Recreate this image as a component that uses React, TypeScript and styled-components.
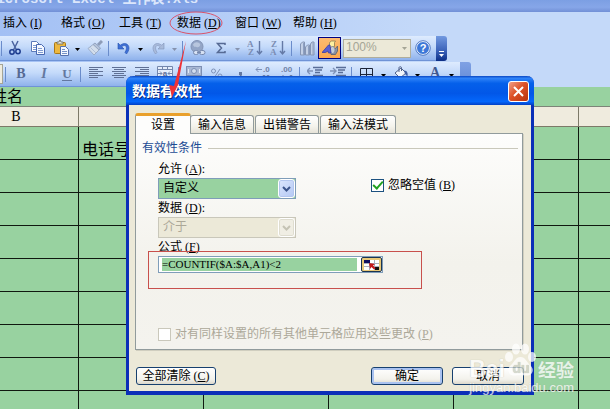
import React from "react";
import styled, { createGlobalStyle, css } from "styled-components";

const sans = `"Liberation Sans", "Noto Sans CJK SC", sans-serif`;
const serif = `"Liberation Serif", "Noto Sans CJK SC", serif`;
const green = "#98d2a0";

const GlobalStyle = createGlobalStyle`
  * { box-sizing: border-box; }
  body { margin: 0; font: 12px/14px ${serif}; color: #000; }
  button, input, select { font: inherit; color: inherit; margin: 0; }
`;

const Screen = styled.div`
  position: relative;
  height: 100vh;
  overflow: hidden;
  background: ${green};
`;

/* ---------- Application window ---------- */

const TitleBar = styled.header`
  height: 12px;
  display: flex;
  align-items: flex-end;
  overflow: hidden;
  background: linear-gradient(#7c9fe3, #86a6e8 60%, #7290d6);
  color: #dbe6fb;
  font: bold 14px/20px "Liberation Mono", "Noto Sans CJK SC", monospace;
  white-space: pre;
`;

const TitleText = styled.span`
  margin: 0 0 3px -12px;
`;

const Dock = styled.div`
  background: linear-gradient(90deg, #a3c0f4, #c4d9f9 70%);
`;

const MenuBar = styled.nav`
  display: flex;
  height: 24px;
  padding-left: 3px;
`;

const MenuItem = styled.button`
  flex: none;
  width: 58px;
  padding: 0 0 2px;
  border: 0;
  background: none;
  text-align: left;
  white-space: nowrap;
`;

const Key = styled.span`
  padding-left: 3px;
`;

const Toolbar = styled.div`
  display: flex;
  align-items: stretch;
  width: max-content;
  height: 25px;
  & + & { margin-top: 1px; }
`;

const Tools = styled.div<{ $end?: number }>`
  display: flex;
  align-items: center;
  padding-right: ${(p) => p.$end ?? 0}px;
  border-bottom: 1px solid #6f93d6;
  background: linear-gradient(#deebfe, #c4dafa 45%, #8fb2ec);
`;

const ToolButton = styled.button<{ $active?: boolean }>`
  display: grid;
  place-items: center;
  width: 23px;
  height: 22px;
  padding: 0;
  border: 1px solid transparent;
  background: none;
  ${(p) =>
    p.$active &&
    css`
      border-color: #000080;
      background: linear-gradient(#fdbb70, #fda850);
    `}
`;

const MoreButton = styled.button`
  display: grid;
  place-items: center;
  width: 11px;
  height: 22px;
  padding: 2px 0 0;
  border: 0;
  background: none;
`;

const Divider = styled.span`
  width: 1px;
  height: 15px;
  margin: 0 3px 0 2px;
  background: #6a8ccb;
`;

const FirstDivider = styled(Divider)`
  margin: 0 1px;
`;

const SizeBoxEdge = styled.span`
  width: 3px;
  height: 20px;
  border: 1px solid #a5a596;
  border-left: 0;
  background: #efebde;
`;

const ZoomSelect = styled.span`
  position: relative;
  width: 68px;
  height: 19px;
  margin-left: 2px;
  color: #a5a596;
  select {
    appearance: none;
    display: block;
    width: 100%;
    height: 100%;
    padding: 0 0 2px 2px;
    border: 1px solid #b0ae9c;
    border-radius: 0;
    background: #ece9d8;
    opacity: 1;
    font: 12px/14px ${sans};
  }
  svg {
    position: absolute;
    right: 4px;
    top: 8px;
  }
`;

const EndCap = styled.button<{ $strong?: boolean }>`
  display: flex;
  align-items: flex-end;
  justify-content: center;
  width: 11px;
  padding: 0 0 3px;
  border: 0;
  border-radius: 0 3px 3px 0;
  background: ${(p) =>
    p.$strong ? "linear-gradient(#7299e0, #3a61b8 60%, #0c2e86)" : "linear-gradient(#7fa1e4, #5f87d4)"};
`;

/* ---------- Sheet ---------- */

const FormulaBar = styled.div`
  height: 20px;
  border-bottom: 1px solid #7d8478;
  background: ${green};
  font: 16px/19px ${serif};
`;

const FormulaText = styled.span`
  display: block;
  margin-left: -9px;
`;

const Sheet = styled.table`
  table-layout: fixed;
  width: max(100%, 750px);
  margin-left: -46px;
  border-spacing: 0;
  col { width: 125px; }
  th {
    height: 20px;
    padding: 1px 0 0;
    border-right: 1px solid #7d7968;
    border-bottom: 1px solid #7d7968;
    background: #efebde;
    font: 14px/18px ${serif};
  }
  td {
    height: 33px;
    padding: 0 3px;
    border-right: 1px solid #101810;
    border-bottom: 1px solid #101810;
    font: 16px/18px ${serif};
    vertical-align: bottom;
  }
`;

/* ---------- Dialog ---------- */

const Dialog = styled.section`
  position: absolute;
  left: 126px;
  right: 76px;
  top: 76px;
  border: solid #0a2fb8;
  border-width: 0 3px 4px;
  border-radius: 7px 7px 0 0;
  background: #ece9d8;
`;

const DialogTitle = styled.div`
  display: flex;
  align-items: center;
  justify-content: space-between;
  height: 29px;
  margin: 0 -3px;
  padding: 1px 5px 0 6px;
  border-radius: 7px 7px 0 0;
  background: linear-gradient(#0a48c4, #2f83f8 8%, #0560ea 25%, #0257e8 60%, #0467fb 88%, #0340c4);
  color: #fff;
  h1 {
    margin: 0;
    font: bold 14px/20px ${sans};
    text-shadow: 1px 1px #0a2a80;
  }
`;

const CloseButton = styled.button`
  display: grid;
  place-items: center;
  width: 21px;
  height: 21px;
  padding: 0;
  border: 1px solid #fff;
  border-radius: 3px;
  background: linear-gradient(135deg, #f0a088, #dd5228 45%, #b8330c);
`;

const DialogBody = styled.div`
  padding: 8px 8px 6px 6px;
`;

const Tabs = styled.div`
  display: flex;
  align-items: flex-end;
  gap: 1px;
  height: 20px;
`;

const Tab = styled.button<{ $selected?: boolean }>`
  height: 18px;
  padding: 0 7px;
  border: 1px solid #919b9c;
  border-bottom: 0;
  border-radius: 3px 3px 0 0;
  background: linear-gradient(#fff, #f4f3ec 60%, #e6e3d8);
  white-space: nowrap;
  ${(p) =>
    p.$selected &&
    css`
      position: relative;
      height: 21px;
      margin: 0 -2px -1px 0;
      padding: 0 15px;
      border-top: 3px solid #e9a02c;
      background: #fdfdfc;
    `}
`;

const Panel = styled.div`
  padding: 7px 4px 8px 6px;
  border: 1px solid #919b9c;
  background: linear-gradient(#fdfdfc, #f3f2ec 60%, #f4f3ee);
  box-shadow: 1px 1px #d0cebf;
`;

const Legend = styled.h2`
  display: flex;
  align-items: center;
  gap: 6px;
  margin: 0 0 7px;
  font: 12px/14px ${serif};
  color: #1b4b94;
  &::after {
    content: "";
    flex: 1;
    height: 1px;
    background: #c9c8bb;
  }
`;

const Columns = styled.div`
  display: grid;
  grid-template-columns: 213px 1fr;
  padding-left: 16px;
`;

const Fields = styled.div`
  display: flex;
  flex-direction: column;
  align-items: flex-start;
`;

const FieldLabel = styled.label`
  height: 14px;
  margin-bottom: 2px;
  white-space: nowrap;
`;

const Combo = styled.span<{ $disabled?: boolean }>`
  position: relative;
  width: 138px;
  height: 21px;
  margin-bottom: 2px;
  select {
    appearance: none;
    display: block;
    width: 100%;
    height: 100%;
    padding: 0 22px 2px 4px;
    border: 1px solid ${(p) => (p.$disabled ? "#c9c7ba" : "#7f9db9")};
    border-radius: 0;
    background: ${(p) => (p.$disabled ? "#ece9d8" : green)};
    color: ${(p) => (p.$disabled ? "#aca899" : "#000")};
    opacity: 1;
  }
`;

const ComboArrow = styled.span<{ $disabled?: boolean }>`
  position: absolute;
  right: 1px;
  top: 1px;
  display: grid;
  place-items: center;
  width: 17px;
  height: 19px;
  border: 1px solid #fff;
  border-radius: 3px;
  background: ${(p) => (p.$disabled ? "#f0eee4" : "linear-gradient(135deg, #dbe6fd, #b4c8f4)")};
  box-shadow: inset 0 0 0 1px ${(p) => (p.$disabled ? "#dfddd0" : "#b3c6ee")};
  pointer-events: none;
`;

const FormulaField = styled.div`
  position: relative;
  display: flex;
  align-items: center;
  justify-content: space-between;
  width: 225px;
  height: 17px;
  padding: 0 0 0 3px;
  border: 1px solid #7f9db9;
  background: #fff;
  input {
    width: 195px;
    height: 13px;
    padding: 0;
    border: 0;
    background: ${green};
    font: 11px/13px ${serif};
  }
`;

const PickButton = styled.button`
  display: grid;
  place-items: center;
  width: 21px;
  height: 15px;
  padding: 0;
  border: 1px solid #1b3450;
  border-radius: 2px;
  background: #e8c878;
`;

const RedFrame = styled.span`
  position: absolute;
  left: -11px;
  top: -6px;
  width: 274px;
  height: 38px;
  border: 1px solid #c8504c;
  pointer-events: none;
`;

const CheckLabel = styled.label<{ $disabled?: boolean }>`
  display: flex;
  align-items: center;
  gap: 4px;
  height: 14px;
  color: ${(p) => (p.$disabled ? "#aca899" : "#000")};
  white-space: nowrap;
  input {
    appearance: none;
    display: grid;
    place-items: center;
    width: 13px;
    height: 13px;
    border: 1px solid ${(p) => (p.$disabled ? "#cac8bb" : "#1c5180")};
    background: #fff;
  }
  input:checked::before {
    content: "";
    width: 8px;
    height: 4px;
    margin-bottom: 3px;
    border: solid #21a121;
    border-width: 0 0 2px 2px;
    transform: rotate(-48deg);
  }
`;

const IgnoreBlank = styled(CheckLabel)`
  margin-top: 16px;
`;

const ApplyAll = styled(CheckLabel)`
  margin: 54px 0 0 16px;
`;

const Footer = styled.div`
  display: flex;
  gap: 9px;
  padding: 17px 0 0 1px;
  margin-right: -1px;
`;

const PushButton = styled.button<{ $primary?: boolean; $wide?: boolean }>`
  width: ${(p) => (p.$wide ? 80 : 72)}px;
  height: 18px;
  padding: 0;
  margin-right: ${(p) => (p.$wide ? "auto" : "0")};
  border: 1px solid #17406f;
  border-radius: 3px;
  background: linear-gradient(#fff, #f3f2ec 70%, #dcd8cc);
  box-shadow: ${(p) => (p.$primary ? "inset 0 0 0 2px #a9c2f0" : "none")};
  white-space: nowrap;
`;

/* ---------- Overlays ---------- */

const Marks = styled.svg`
  position: absolute;
  left: 0;
  top: 0;
  pointer-events: none;
`;

const Watermark = styled.div`
  position: absolute;
  right: 36px;
  bottom: 14px;
  display: flex;
  flex-direction: column;
  color: #fff;
  opacity: 0.75;
  pointer-events: none;
  font: 13px/14px ${sans};
  text-shadow: 0 0 1px #a8a898;
`;

const Brand = styled.div`
  display: flex;
  align-items: flex-end;
  height: 38px;
  font: bold 23px/24px ${sans};
  strong {
    font: bold 18px/24px "Noto Sans CJK SC", sans-serif;
  }
  svg {
    flex: none;
    margin: 0 0 4px -1px;
  }
`;

/* ---------- Icons ---------- */

const Icon = ({ children, w = 16 }: { children: React.ReactNode; w?: number }) => (
  <svg width={w} height="16" viewBox={`0 0 ${w} 16`} aria-hidden="true">
    {children}
  </svg>
);

const Down = ({ color = "#000" }: { color?: string }) => (
  <svg width="5" height="3" viewBox="0 0 5 3" aria-hidden="true">
    <path d="M0 0h5L2.500 3z" fill={color} />
  </svg>
);

const More = ({ off, label }: { off?: boolean; label: string }) => (
  <MoreButton aria-label={label}>
    <Down color={off ? "#8592ad" : "#000"} />
  </MoreButton>
);

const lines = (rows: number[][]) =>
  rows.map(([x, w], i) => <rect key={i} x={x} y={1 + i * 2} width={w} height="1" fill="#5f7094" />);

const icons = {
  cut: (
    <Icon>
      <path d="M5 1l4.500 9M11 1L6.500 10" stroke="#4b64a0" strokeWidth="1.500" fill="none" />
      <circle cx="5" cy="12" r="2.200" stroke="#1d3c8f" strokeWidth="1.500" fill="none" />
      <circle cx="11" cy="11.500" r="2.200" stroke="#1d3c8f" strokeWidth="1.500" fill="none" />
    </Icon>
  ),
  copy: (
    <Icon>
      <path d="M1.500 1.500h5l3 3v7h-8z" fill="#fff" stroke="#5b7ab9" />
      <path d="M3 5.500h4M3 7.500h4M3 9.500h3" stroke="#7f9bd0" />
      <path d="M6.500 4.500h5l3 3v7h-8z" fill="#f4f8ff" stroke="#4868b0" />
      <path d="M8 8.500h4M8 10.500h5M8 12.500h5" stroke="#7f9bd0" />
    </Icon>
  ),
  paste: (
    <Icon>
      <rect x="1.500" y="2.500" width="11" height="11" rx="1" fill="#edb83f" stroke="#a87818" />
      <path d="M4 4V2h2l1-2 1 2h2v2z" fill="#e9e7df" stroke="#6b6754" strokeWidth=".8" />
      <path d="M7.500 6.500h5l3 3v6h-8z" fill="#f5f9ff" stroke="#5672ae" />
      <path d="M9 9.500h3M9 11.500h5M9 13.500h5" stroke="#7693c8" />
    </Icon>
  ),
  brush: (
    <Icon>
      <path d="M15 1l-4 4" stroke="#8d9cb8" strokeWidth="3" />
      <path d="M8 3l5.500 5-1.500 2-6-5.500z" fill="#b6c4da" stroke="#7f90b0" strokeWidth=".7" />
      <path d="M6 4.500l6 5.500-5 5L1 8.500z" fill="#d3deec" stroke="#92a2be" strokeWidth=".8" />
      <path d="M3.500 7.500L9 13" stroke="#b4c1d8" />
    </Icon>
  ),
  undo: (
    <Icon>
      <path d="M2 3v6h6L5.800 6.800C9 3.800 12.500 6.500 9 12.500l1.500 1.500C16.500 6.500 10.500.5 4.200 5.200z" fill="#3e6fd6" stroke="#2450ad" strokeWidth=".6" />
    </Icon>
  ),
  redo: (
    <Icon>
      <path d="M14 3v6H8l2.200-2.200C7 3.800 3.500 6.500 7 12.500L5.500 14C-.5 6.500 5.500.5 11.800 5.200z" fill="#a9bbdb" stroke="#8194bb" strokeWidth=".6" />
    </Icon>
  ),
  link: (
    <Icon>
      <circle cx="7" cy="6.500" r="6" fill="#93a5c6" stroke="#8293b5" />
      <path d="M3 4.500C5 1 9 2 10 4S8 8 6.500 7 4 8 3 4.500z" fill="#b8c6de" />
      <rect x="3.500" y="10.500" width="5" height="4" rx="2" fill="#d6e1f3" stroke="#7688ad" />
      <rect x="9.500" y="10.500" width="5.500" height="4" rx="2" fill="#d6e1f3" stroke="#7688ad" />
      <path d="M7 12.500h4" stroke="#7688ad" />
    </Icon>
  ),
  sum: (
    <Icon>
      <path d="M12 5V3.500H4.500l4 4.500-4 4.500H12V11" fill="none" stroke="#566a94" strokeWidth="1.500" />
    </Icon>
  ),
  az: (
    <Icon>
      <text x="0" y="7" fontSize="9" fontFamily="Liberation Serif" fontWeight="bold" fill="#7b8db3">A</text>
      <text x="1" y="15" fontSize="9" fontFamily="Liberation Serif" fontWeight="bold" fill="#7b8db3">Z</text>
      <path d="M12.500 1v13M10 11l2.500 3 2.500-3" stroke="#6479a6" strokeWidth="1.400" fill="none" />
    </Icon>
  ),
  za: (
    <Icon>
      <text x="1" y="7" fontSize="9" fontFamily="Liberation Serif" fontWeight="bold" fill="#7b8db3">Z</text>
      <text x="0" y="15" fontSize="9" fontFamily="Liberation Serif" fontWeight="bold" fill="#7b8db3">A</text>
      <path d="M12.500 1v13M10 11l2.500 3 2.500-3" stroke="#6479a6" strokeWidth="1.400" fill="none" />
    </Icon>
  ),
  chart: (
    <Icon>
      <path d="M1.500 15V4l2-2h2v13zM6.500 15V7l2-2h2v10zM11.500 15V4l1.500-2h2v13z" fill="#c3d0e6" stroke="#8595b4" />
      <path d="M4.500 3v12M9.500 6v9M14 3v12" stroke="#8ea0c1" />
    </Icon>
  ),
  draw: (
    <Icon>
      <path d="M7.500 2.500l2-1.500h4l-1 1.500v4l-5 1z" fill="#fff0a0" stroke="#8a7a50" strokeWidth=".8" />
      <path d="M9 8.500h4.500l2-2.500v5l-2 3.500H9z" fill="#8c93a5" stroke="#555d73" strokeWidth=".8" />
      <ellipse cx="10.500" cy="10" rx="2.500" ry="3.500" fill="#c6cdd8" stroke="#6d7486" strokeWidth=".6" />
      <path d="M0 12.500L6.500 5h1.500l1 8H6.500L6 11l-2.500 1.500z" fill="#5b5fd0" stroke="#3b3da5" strokeWidth=".8" />
    </Icon>
  ),
  help: (
    <Icon>
      <circle cx="8" cy="8" r="6.500" fill="#3d78d8" stroke="#fff" />
      <circle cx="8" cy="8" r="7.300" fill="none" stroke="#3a66b8" strokeWidth=".8" />
      <text x="8" y="12" fontSize="11" textAnchor="middle" fontFamily="Liberation Sans" fontWeight="bold" fill="#fff">?</text>
    </Icon>
  ),
  bold: <Icon><text x="8" y="12" fontSize="14" textAnchor="middle" fontFamily="Liberation Serif" fontWeight="bold" fill="#566a94">B</text></Icon>,
  italic: <Icon><text x="8" y="12" fontSize="14" textAnchor="middle" fontFamily="Liberation Serif" fontWeight="bold" fontStyle="italic" fill="#6478a0">I</text></Icon>,
  underline: (
    <Icon>
      <text x="8" y="12" fontSize="13" textAnchor="middle" fontFamily="Liberation Serif" fontWeight="bold" fill="#6478a0">U</text>
      <path d="M3 14.500h10" stroke="#6478a0" />
    </Icon>
  ),
  left: <Icon>{lines([[1, 14], [1, 9], [1, 14], [1, 9], [1, 14], [1, 9]])}</Icon>,
  center: <Icon>{lines([[1, 14], [3, 10], [1, 14], [3, 10], [1, 14], [3, 10]])}</Icon>,
  right: <Icon>{lines([[1, 14], [6, 9], [1, 14], [6, 9], [1, 14], [6, 9]])}</Icon>,
  merge: (
    <Icon>
      <path d="M.5.500h15v14H.5zM.5 3.500h15M.5 11.500h15M5.500.500v3M10.500.500v3M5.500 11.500v3M10.500 11.500v3" fill="#e6eefb" stroke="#7487ad" />
      <path d="M1 7.500h4M3 5.500l2 2-2 2M15 7.500h-4M13 5.500l-2 2 2 2" fill="none" stroke="#7487ad" />
      <text x="8" y="10" fontSize="8" textAnchor="middle" fontFamily="Liberation Sans" fontWeight="bold" fill="#5b6e97">a</text>
    </Icon>
  ),
  money: (
    <Icon>
      <rect x=".5" y=".5" width="15" height="9" fill="#a9b8d4" stroke="#7d8fb3" />
      <circle cx="8" cy="5" r="2.500" fill="#d3deef" stroke="#7d8fb3" />
      <path d="M2.500 3v4M13.500 3v4" stroke="#e2eaf6" />
      <ellipse cx="5" cy="12" rx="3.500" ry="2" fill="#c3cfe4" stroke="#7d8fb3" />
    </Icon>
  ),
  percent: (
    <Icon>
      <circle cx="4.500" cy="5" r="2" fill="none" stroke="#8093b8" />
      <circle cx="11" cy="10" r="2" fill="none" stroke="#8093b8" />
      <path d="M11 3L5 12" stroke="#8093b8" />
    </Icon>
  ),
  comma: <Icon><path d="M7 6h3v3l-2 3H6.500L8 9H7z" fill="#6478a0" /></Icon>,
  addDecimal: (
    <Icon>
      <path d="M1 3.500h6M3.500 1L1 3.500 3.500 6" stroke="#7f92b8" fill="none" />
      <text x="8" y="6" fontSize="8" fontFamily="Liberation Sans" fontWeight="bold" fill="#7082a8">.0</text>
      <path d="M5 13v1M8 9.500h2v4H8zM12 9.500h2v4h-2z" stroke="#7082a8" fill="none" />
    </Icon>
  ),
  cutDecimal: (
    <Icon>
      <text x="3" y="6" fontSize="8" fontFamily="Liberation Sans" fontWeight="bold" fill="#7082a8">.00</text>
      <path d="M9 13v1M12 9.500h2v4h-2zM1 11.500h6M4.500 9L7 11.500 4.500 14" stroke="#7082a8" fill="none" />
    </Icon>
  ),
  outdent: (
    <Icon>
      <path d="M6 1.500h10M8 4h7M8 6.500h5M6 9.500h10" stroke="#5a6e98" strokeWidth="1.500" />
      <path d="M0 5h6M3 2L0 5l3 3" stroke="#8093b8" strokeWidth="1.400" fill="none" />
    </Icon>
  ),
  indent: (
    <Icon>
      <path d="M6 1.500h10M8 4h7M8 6.500h5M6 9.500h10" stroke="#5a6e98" strokeWidth="1.500" />
      <path d="M0 5h6M3 2l3 3-3 3" stroke="#8093b8" strokeWidth="1.400" fill="none" />
    </Icon>
  ),
  borders: <Icon><path d="M1.500 2.500h12v12h-12zM7.500 2v12M1.500 8.500h12" stroke="#1c2438" fill="none" /></Icon>,
  fill: (
    <Icon>
      <path d="M2 7l6-5 5 5-6 5z" fill="#f1f5fb" stroke="#50628b" />
      <path d="M6 6V1.500C6 .5 8.500.500 8.500 1.500V5" fill="none" stroke="#50628b" />
      <path d="M11 4.500c3.500 0 4 3 3.500 6L12 8z" fill="#3f5ea4" />
    </Icon>
  ),
  font: <Icon><text x="8" y="11" fontSize="14" textAnchor="middle" fontFamily="Liberation Serif" fontWeight="bold" fill="#40588f">A</text></Icon>,
};

type IconName = keyof typeof icons;

const Tool = ({ name, active }: { name: IconName; active?: boolean }) => (
  <ToolButton aria-label={name} $active={active}>
    {icons[name]}
  </ToolButton>
);

const Chevron = ({ color }: { color: string }) => (
  <svg width="9" height="6" viewBox="0 0 9 6" aria-hidden="true">
    <path d="M1 1l3.500 3.500L8 1" fill="none" stroke={color} strokeWidth="2" />
  </svg>
);

const Paw = () => (
  <svg width="34" height="34" viewBox="0 0 34 34" aria-hidden="true">
    <ellipse cx="5" cy="14" rx="4" ry="5" fill="#fff" />
    <ellipse cx="12" cy="6" rx="4" ry="5.500" fill="#fff" />
    <ellipse cx="21" cy="6" rx="4" ry="5.500" fill="#fff" />
    <ellipse cx="28" cy="14" rx="4" ry="5" fill="#fff" />
    <path d="M16.500 14c5 0 6 5 10 8.500 5 5 1 11-5 10-3-.5-7-.5-10 0-6 1-10-5-5-10 4-3.500 5-8.500 10-8.500z" fill="#fff" />
    <text x="17" y="30" fontSize="14" textAnchor="middle" fontFamily="Liberation Sans" fontWeight="bold" fill="#c9cfc2">du</text>
  </svg>
);

const menus = [
  ["插入", "I"],
  ["格式", "O"],
  ["工具", "T"],
  ["数据", "D"],
  ["窗口", "W"],
  ["帮助", "H"],
];

const Accel = ({ k, tail = "" }: { k: string; tail?: string }) => (
  <Key>
    (<u>{k}</u>){tail}
  </Key>
);

export default function App() {
  return (
    <Screen>
      <GlobalStyle />
      <TitleBar>
        <TitleText>Microsoft Excel 工作表.xls</TitleText>
      </TitleBar>
      <Dock>
        <MenuBar>
          {menus.map(([text, k]) => (
            <MenuItem key={k}>
              {text}
              <Accel k={k} />
            </MenuItem>
          ))}
        </MenuBar>
        <Toolbar>
          <Tools $end={2}>
            <FirstDivider />
            <Tool name="cut" />
            <Tool name="copy" />
            <Tool name="paste" />
            <More label="paste options" />
            <Tool name="brush" />
            <Divider />
            <Tool name="undo" />
            <More label="undo list" />
            <Tool name="redo" />
            <More off label="redo list" />
            <Divider />
            <Tool name="link" />
            <Tool name="sum" />
            <More off label="functions" />
            <Tool name="az" />
            <Tool name="za" />
            <Divider />
            <Tool name="chart" />
            <Tool name="draw" active />
            <ZoomSelect>
              <select aria-label="zoom" disabled>
                <option>100%</option>
              </select>
              <Down color="#a5a596" />
            </ZoomSelect>
            <Tool name="help" />
          </Tools>
          <EndCap $strong aria-label="toolbar options">
            <svg width="7" height="8" viewBox="0 0 7 8" aria-hidden="true">
              <path d="M1 1.500h5" stroke="#fff" />
              <path d="M1 4h5L3.500 7z" fill="#fff" />
            </svg>
          </EndCap>
        </Toolbar>
        <Toolbar>
          <Tools $end={3}>
            <SizeBoxEdge />
            <Divider />
            <Tool name="bold" />
            <Tool name="italic" />
            <Tool name="underline" />
            <Divider />
            <Tool name="left" />
            <Tool name="center" />
            <Tool name="right" />
            <Tool name="merge" />
            <Divider />
            <Tool name="money" />
            <Tool name="percent" />
            <Tool name="comma" />
            <Tool name="addDecimal" />
            <Tool name="cutDecimal" />
            <Divider />
            <Tool name="outdent" />
            <Tool name="indent" />
            <Divider />
            <Tool name="borders" />
            <More label="border styles" />
            <Tool name="fill" />
            <More label="fill colors" />
            <Tool name="font" />
            <More label="font colors" />
          </Tools>
          <EndCap aria-label="format options" />
        </Toolbar>
      </Dock>
      <FormulaBar>
        <FormulaText>姓名</FormulaText>
      </FormulaBar>
      <Sheet>
        <colgroup>
          {[0, 1, 2, 3, 4, 5].map((c) => (
            <col key={c} />
          ))}
        </colgroup>
        <thead>
          <tr>
            <th>B</th>
            <th />
            <th />
            <th />
            <th />
            <th />
          </tr>
        </thead>
        <tbody>
          {[0, 1, 2, 3, 4, 5, 6, 7, 8].map((r) => (
            <tr key={r}>
              <td />
              <td>{r === 0 ? "电话号" : ""}</td>
              <td />
              <td />
              <td />
              <td />
            </tr>
          ))}
        </tbody>
      </Sheet>

      <Dialog role="dialog" aria-labelledby="dialog-title">
        <DialogTitle>
          <h1 id="dialog-title">数据有效性</h1>
          <CloseButton aria-label="close">
            <svg width="13" height="13" viewBox="0 0 13 13" aria-hidden="true">
              <path d="M2 2l9 9M11 2l-9 9" stroke="#fff" strokeWidth="2" />
            </svg>
          </CloseButton>
        </DialogTitle>
        <DialogBody>
          <Tabs role="tablist">
            <Tab role="tab" aria-selected="true" $selected>设置</Tab>
            <Tab role="tab">输入信息</Tab>
            <Tab role="tab">出错警告</Tab>
            <Tab role="tab">输入法模式</Tab>
          </Tabs>
          <Panel role="tabpanel">
            <Legend>有效性条件</Legend>
            <Columns>
              <Fields>
                <FieldLabel htmlFor="allow">
                  允许
                  <Accel k="A" tail=":" />
                </FieldLabel>
                <Combo>
                  <select id="allow">
                    <option>自定义</option>
                  </select>
                  <ComboArrow><Chevron color="#3c558c" /></ComboArrow>
                </Combo>
                <FieldLabel htmlFor="data">
                  数据
                  <Accel k="D" tail=":" />
                </FieldLabel>
                <Combo $disabled>
                  <select id="data" disabled>
                    <option>介于</option>
                  </select>
                  <ComboArrow $disabled><Chevron color="#c5c3b4" /></ComboArrow>
                </Combo>
                <FieldLabel htmlFor="formula">
                  公式
                  <Accel k="F" />
                </FieldLabel>
                <FormulaField>
                  <input id="formula" defaultValue="=COUNTIF($A:$A,A1)<2" />
                  <PickButton aria-label="select range">
                    <svg width="17" height="12" viewBox="0 0 17 12" aria-hidden="true">
                      <path d="M1 1h15v10H1z" fill="#fff" />
                      <path d="M1 4.500h15M1 7.500h15M6.500 1v10M11.500 1v10" stroke="#a9b1c0" />
                      <path d="M1 1h6v3H1z" fill="#101060" />
                      <path d="M12 8h4v3h-4z" fill="#101010" />
                      <path d="M6 4l6 1-2 1.500 2.500 2.500-1.500 1.500L8.500 8 7 10z" fill="#c41818" />
                    </svg>
                  </PickButton>
                  <RedFrame />
                </FormulaField>
              </Fields>
              <IgnoreBlank>
                <input type="checkbox" defaultChecked />
                <span>
                  忽略空值
                  <Accel k="B" />
                </span>
              </IgnoreBlank>
            </Columns>
            <ApplyAll $disabled>
              <input type="checkbox" disabled />
              <span>
                对有同样设置的所有其他单元格应用这些更改
                <Accel k="P" />
              </span>
            </ApplyAll>
          </Panel>
          <Footer>
            <PushButton $wide>
              全部清除
              <Accel k="C" />
            </PushButton>
            <PushButton $primary>确定</PushButton>
            <PushButton>取消</PushButton>
          </Footer>
        </DialogBody>
      </Dialog>

      <Marks width="240" height="110" viewBox="0 0 240 110" aria-hidden="true">
        <ellipse cx="196" cy="23" rx="26" ry="11" fill="none" stroke="#d9536a" />
        <path d="M186 41l-8 44 -1 2-5 10-3-12 5 1z" fill="#ee3338" />
      </Marks>

      <Watermark>
        <Brand>
          <span>Bai</span>
          <Paw />
          <strong>经验</strong>
        </Brand>
        <span>jingyan.baidu.com</span>
      </Watermark>
    </Screen>
  );
}
